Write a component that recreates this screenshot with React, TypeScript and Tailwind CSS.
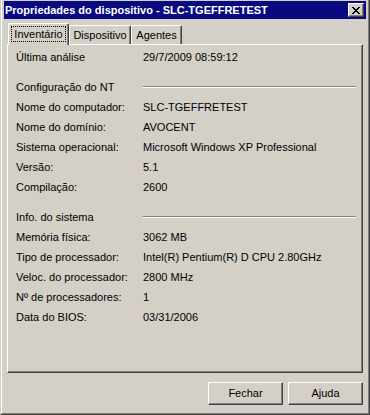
import React from "react";

const font = { fontFamily: '"Liberation Sans", Arial, sans-serif' };

function CloseGlyph() {
  const rows = ["11000011", "01100110", "00111100", "00011000", "00111100", "01100110", "11000011"];
  const rects: JSX.Element[] = [];
  rows.forEach((r, y) =>
    r.split("").forEach((c, x) => {
      if (c === "1") rects.push(<rect key={`${x}-${y}`} x={x} y={y} width={1} height={1} fill="#000" />);
    })
  );
  return (
    <svg width="8" height="7" viewBox="0 0 8 7" shapeRendering="crispEdges">
      {rects}
    </svg>
  );
}

function Row({ label, value }: { label: string; value: string }) {
  return (
    <div className="flex h-[20px] items-center">
      <div className="w-[127px] shrink-0">{label}</div>
      <div>{value}</div>
    </div>
  );
}

function Header({ label }: { label: string }) {
  return (
    <div className="flex h-[20px] items-center">
      <div className="w-[127px] shrink-0">{label}</div>
      <div className="mr-[6px] flex-1 border-t border-b border-t-[#808080] border-b-white" />
    </div>
  );
}

export default function App() {
  return (
    <div
      className="w-[370px] h-[415px] bg-[#D4D0C8] border-l border-r border-b border-l-[#D4D0C8] border-r-[#404040] border-b-[#404040] text-[11px] text-black"
      style={font}
    >
      <div className="h-full border-l border-r border-b border-l-white border-r-[#808080] border-b-[#808080] px-[2px] pt-[1px] pb-[2px] flex flex-col">
        {/* Title bar */}
        <div className="h-[18px] bg-[#0A0A80] flex items-center justify-between pl-[1px] pr-[2px]">
          <span className="text-white font-bold text-[11px] leading-none">
            Propriedades do dispositivo - SLC-TGEFFRETEST
          </span>
          <div className="w-[16px] h-[14px] bg-[#D4D0C8] border-t border-l border-r border-b border-t-white border-l-white border-r-[#404040] border-b-[#404040] shadow-[inset_-1px_-1px_0_#808080] flex items-center justify-center">
            <CloseGlyph />
          </div>
        </div>

        {/* Body */}
        <div className="px-[3px] pt-[4px] flex flex-col">
          {/* Tabs */}
          <div className="flex items-end h-[21px] pl-[1px] relative z-10">
            <div className="h-[22px] mb-[-1px] w-[61px] bg-[#D4D0C8] border-t border-l border-r border-t-white border-l-white border-r-[#404040] shadow-[inset_-1px_0_0_#808080] rounded-t-[2px] flex justify-center pt-[2px]">
              <span className="h-[16px] px-[2px] border border-dotted border-black flex items-center leading-none">
                Inventário
              </span>
            </div>
            <div className="h-[19px] w-[62px] border-t border-l border-r border-t-white border-l-white border-r-[#404040] shadow-[inset_-1px_0_0_#808080] rounded-t-[2px] flex items-center justify-center leading-none pt-[1px]">
              Dispositivo
            </div>
            <div className="h-[19px] w-[51px] border-t border-l border-r border-t-white border-l-white border-r-[#404040] shadow-[inset_-1px_0_0_#808080] rounded-t-[2px] flex items-center justify-center leading-none pt-[1px]">
              Agentes
            </div>
          </div>

          {/* Panel */}
          <div className="h-[329px] border-t border-l border-r border-b border-t-white border-l-white border-r-[#404040] border-b-[#404040] shadow-[inset_-1px_-1px_0_#808080] pl-[8px] pt-[2px] flex flex-col">
            <Row label="Última análise" value="29/7/2009 08:59:12" />
            <div className="h-[10px]" />
            <Header label="Configuração do NT" />
            <Row label="Nome do computador:" value="SLC-TGEFFRETEST" />
            <Row label="Nome do domínio:" value="AVOCENT" />
            <Row label="Sistema operacional:" value="Microsoft Windows XP Professional" />
            <Row label="Versão:" value="5.1" />
            <Row label="Compilação:" value="2600" />
            <div className="h-[10px]" />
            <Header label="Info. do sistema" />
            <Row label="Memória física:" value="3062 MB" />
            <Row label="Tipo de processador:" value="Intel(R) Pentium(R) D CPU 2.80GHz" />
            <Row label="Veloc. do processador:" value="2800 MHz" />
            <Row label="Nº de processadores:" value="1" />
            <Row label="Data do BIOS:" value="03/31/2006" />
          </div>

          {/* Buttons */}
          <div className="mt-[9px] flex justify-end gap-[5px]">
            <div className="w-[75px] h-[23px] border-t border-l border-r border-b border-t-white border-l-white border-r-[#404040] border-b-[#404040] shadow-[inset_-1px_-1px_0_#808080] flex items-center justify-center leading-none">
              Fechar
            </div>
            <div className="w-[75px] h-[23px] border-t border-l border-r border-b border-t-white border-l-white border-r-[#404040] border-b-[#404040] shadow-[inset_-1px_-1px_0_#808080] flex items-center justify-center leading-none">
              Ajuda
            </div>
          </div>
        </div>
      </div>
    </div>
  );
}
